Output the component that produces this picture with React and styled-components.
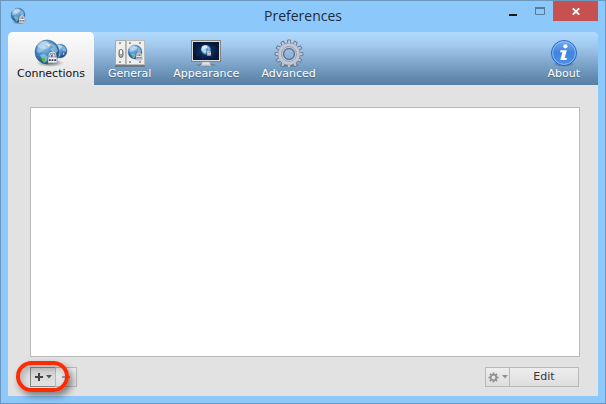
import React from "react";
import styled, { createGlobalStyle, css } from "styled-components";

const GlobalStyle = createGlobalStyle`
  *, *::before, *::after { box-sizing: border-box; }
  body { margin: 0; font-family: "DejaVu Sans", sans-serif; font-size: 11px; }
  button { font: inherit; margin: 0; border: 0; padding: 0; background: none; }
  svg { display: block; flex: none; }
`;

const Window = styled.main`
  min-height: 100vh;
  display: flex;
  flex-direction: column;
  padding: 0 7px 7px;
  border: 1px solid #6c98c0;
  background: #8dc8fb;
`;

const TitleBar = styled.header`
  height: 31px;
  flex: none;
  display: grid;
  grid-template-columns: 1fr auto 1fr;
  align-items: start;
`;

const AppIcon = styled.span`
  padding: 6px 0 0 2px;
`;

const Title = styled.h1`
  margin: 0;
  font: 400 14px/30px "Open Sans", sans-serif;
  color: #222c38;
`;

const WindowControls = styled.div`
  display: flex;
  justify-content: flex-end;
`;

const WindowButton = styled.button`
  width: ${(p) => (p.$close ? 45 : 27)}px;
  height: 20px;
  display: flex;
  align-items: center;
  justify-content: center;
  background: ${(p) => (p.$close ? "#c75050" : "transparent")};
`;

const Client = styled.section`
  flex: 1;
  display: flex;
  flex-direction: column;
  border-radius: 5px 5px 0 0;
  background: #e2e2e2;
`;

const Toolbar = styled.nav`
  height: 53px;
  flex: none;
  display: flex;
  border-radius: 5px 5px 0 0;
  background: linear-gradient(#b1daff 0%, #a2caed 25%, #648bb0 85%, #587fa4 100%);
`;

const TabButton = styled.button`
  display: flex;
  flex-direction: column;
  align-items: center;
  justify-content: flex-start;
  padding: 6px 11px 0;
  line-height: 14px;
  color: #fff;
  text-shadow: 0 1px 1px #43678a;
  ${(p) => p.$active && css`
    padding: 6px 9px 0;
    margin-right: 3px;
    border-radius: 5px 5px 0 0;
    color: #111;
    text-shadow: none;
    background: linear-gradient(#fcfcfc, #e2e2e2);
  `}
  ${(p) => p.$end && css`
    margin-left: auto;
    padding: 6px 18px 0;
  `}
`;

const Body = styled.div`
  flex: 1;
  display: flex;
  flex-direction: column;
  padding: 22px 18px 9px 22px;
`;

const ConnectionList = styled.div`
  flex: 1;
  border: 1px solid #bababa;
  background: #fff;
`;

const Actions = styled.footer`
  display: flex;
  justify-content: space-between;
  margin: 10px 1px 0 0;
`;

const ButtonGroup = styled.div`
  position: relative;
  display: flex;
`;

const ActionButton = styled.button`
  width: ${(p) => p.$width}px;
  height: 20px;
  display: flex;
  align-items: center;
  justify-content: center;
  gap: 3px;
  border: 1px solid #b9b9b9;
  color: #36364a;
  line-height: 18px;
  background: ${(p) => (p.$pressed ? "linear-gradient(#d2d2d2, #e2e2e2)" : "linear-gradient(#ededed, #dedede)")};
  & + & { margin-left: -1px; }
  ${(p) => p.$pressed && css`border-color: #888;`}
`;

const Highlight = styled.span`
  position: absolute;
  inset: -6px 8px -5px -14px;
  border: 4px solid #fb2c05;
  border-radius: 16px;
  box-shadow: 3px 4px 7px rgba(0, 0, 0, 0.45), inset 3px 4px 6px rgba(0, 0, 0, 0.2);
  pointer-events: none;
`;

function Globe({ x, y, r }) {
  return (
    <g transform={`translate(${x} ${y}) scale(${r / 12})`}>
      <circle r="12" fill="url(#globe)" stroke="#3d6794" strokeWidth=".6" />
      <path d="M-9-6-5-10 0-11 1-8-3-6-1-4-4-1-8 1-10-1ZM4-9 9-6 11-1 8 2 5-1 3-3 6-5 3-7ZM-7 3-3 2 1 5 0 9-3 11-5 7Z" fill="#a9d8ee" opacity=".6" />
      <path d="M-5 6-2 6-2 9-5 9Z" fill="#49bd48" />
      <path d="M-1-8 3-8 2-5ZM6 2 8 5 5 7Z" fill="#f0dda0" />
      <ellipse cx="-3" cy="-7" rx="7" ry="4" fill="#fff" opacity=".32" />
    </g>
  );
}

function Lock({ x, y, size }) {
  return (
    <g transform={`translate(${x} ${y}) scale(${size / 10})`}>
      <path d="M2 5V3a3 3 0 0 1 6 0v2" fill="none" stroke="#fff" strokeWidth="2.6" />
      <path d="M2 5V3a3 3 0 0 1 6 0v2" fill="none" stroke="#858585" strokeWidth="1.2" />
      <rect y="4.5" width="10" height="7" rx=".7" fill="#f3f4fa" stroke="#77798a" strokeWidth=".7" />
      <path d="M1 8h2m1 0h2m1 0h2" stroke="#28366f" strokeWidth="2" />
      <path d="M1 10.5h8" stroke="#aaa" strokeWidth=".7" />
    </g>
  );
}

function Defs() {
  return (
    <svg width="0" height="0" aria-hidden="true">
      <defs>
        <radialGradient id="globe" cx=".4" cy=".3" r=".75">
          <stop stopColor="#8cc4ee" /><stop offset=".55" stopColor="#437fbe" /><stop offset="1" stopColor="#173d70" />
        </radialGradient>
        <radialGradient id="shade"><stop stopColor="#222" stopOpacity=".65" /><stop offset="1" stopColor="#222" stopOpacity="0" /></radialGradient>
        <radialGradient id="screen"><stop stopColor="#123e75" /><stop offset="1" stopColor="#051638" /></radialGradient>
        <linearGradient id="metal" x2="0" y2="1"><stop stopColor="#fafafa" /><stop offset="1" stopColor="#b9bfca" /></linearGradient>
        <linearGradient id="blue" x2="0" y2="1"><stop stopColor="#78afee" /><stop offset=".48" stopColor="#4184dc" /><stop offset="1" stopColor="#4b91e9" /></linearGradient>
      </defs>
    </svg>
  );
}

function ConnectionsIcon() {
  return (
    <svg width="36" height="29" viewBox="0 0 36 29">
      <ellipse cx="17" cy="25" rx="14" ry="4" fill="url(#shade)" />
      <Globe x={27} y={13} r={7} />
      <Globe x={14} y={14} r={12} />
      <Lock x={15} y={15} size={9} />
    </svg>
  );
}

function GeneralIcon() {
  return (
    <svg width="32" height="29" viewBox="0 0 32 29">
      <rect x="1" y="2" width="30" height="27" fill="#5b6064" opacity=".6" />
      <rect x="1.5" y="2.5" width="10" height="24" fill="#eeeeec" stroke="#aaa" />
      <rect x="12.5" y="2.5" width="18" height="24" fill="#eeeeec" stroke="#bbb" />
      <path d="M12 3v24" stroke="#bbb" />
      {[[6, 5], [6, 24], [16, 5], [26, 5], [16, 24], [26, 24]].map(([x, y]) => <rect key={`${x}-${y}`} x={x - 1} y={y - 1} width="2" height="2" rx=".5" fill="#999690" />)}
      <rect x="5" y="11.5" width="4" height="8" rx="2" fill="#aaa" stroke="#555" strokeWidth=".8" />
      <rect x="6" y="12" width="2" height="4" rx="1" fill="#fff" />
      <Globe x={21} y={14} r={7} />
      <Lock x={22} y={15} size={6} />
    </svg>
  );
}

function AppearanceIcon() {
  return (
    <svg width="32" height="29" viewBox="0 0 32 29">
      <ellipse cx="16" cy="27" rx="11" ry="2" fill="url(#shade)" />
      <path d="M12 24h8v2l2 2H10l2-2Z" fill="url(#metal)" stroke="#9ba3aa" strokeWidth=".6" />
      <rect x="1.5" y="2.5" width="29" height="21" fill="#dedede" stroke="#87837c" />
      <rect x="3" y="4" width="26" height="18" fill="url(#screen)" />
      <path d="M6 7h1m5 13h1m10-11h1m-3 10h1M7 17h1" stroke="#1d4275" />
      <Globe x={16} y={12} r={5} />
      <path d="M12 8 16 7 18 9 15 11 17 14 14 15 11 12Z" fill="#e7fbff" opacity=".6" />
      <Lock x={17} y={13} size={4} />
    </svg>
  );
}

function AdvancedIcon() {
  return (
    <svg width="30" height="29" viewBox="0 0 30 29">
      <ellipse cx="15" cy="27" rx="11" ry="3" fill="url(#shade)" opacity=".7" />
      <g fill="#c0c8d5" stroke="#66788e" strokeWidth=".9">
        {Array.from({ length: 12 }, (_, i) => <path key={i} d="M13 7 13.6 2h2.8L17 7" transform={`rotate(${i * 30} 15 16)`} />)}
        <path fillRule="evenodd" d="M15 5.5a10.5 10.5 0 1 0 0 21 10.5 10.5 0 0 0 0-21m0 5a5.5 5.5 0 1 1 0 11 5.5 5.5 0 0 1 0-11" />
      </g>
      <g fill="none">
        <circle cx="15" cy="16" r="9.9" stroke="#c0c8d5" strokeWidth="1.8" />
        <circle cx="15" cy="16" r="7.5" stroke="#96a5b9" />
        <circle cx="15" cy="16" r="5.4" stroke="#64768d" strokeWidth="1.2" />
      </g>
    </svg>
  );
}

function AboutIcon() {
  return (
    <svg width="28" height="29" viewBox="0 0 28 29">
      <ellipse cx="14" cy="26" rx="11" ry="3" fill="url(#shade)" />
      <circle cx="14" cy="15" r="12.5" fill="url(#blue)" stroke="#286ac9" />
      <circle cx="14" cy="15" r="11.4" fill="none" stroke="#9ac5fa" strokeWidth=".8" />
      <circle cx="15.4" cy="8.3" r="2.1" fill="#fff" />
      <path d="M10.5 12.3h6.3l-2.1 7.8h2.3l-.5 1.9h-6.2l2.1-7.8h-2.3Z" fill="#fff" />
    </svg>
  );
}

function Caret({ color }) {
  return <svg width="6" height="4" viewBox="0 0 6 4"><path d="M0 0h6L3 3.5Z" fill={color} /></svg>;
}

function SmallGear() {
  return (
    <svg width="11" height="11" viewBox="0 0 11 11">
      <g stroke="#929292" fill="none">
        <circle cx="5.5" cy="5.5" r="2.8" strokeWidth="1.8" />
        {Array.from({ length: 8 }, (_, i) => <path key={i} d="M5.5 0.5v2" strokeWidth="1.8" transform={`rotate(${i * 45} 5.5 5.5)`} />)}
      </g>
    </svg>
  );
}

const tabs = [
  { label: "Connections", Icon: ConnectionsIcon, active: true },
  { label: "General", Icon: GeneralIcon },
  { label: "Appearance", Icon: AppearanceIcon },
  { label: "Advanced", Icon: AdvancedIcon },
  { label: "About", Icon: AboutIcon, end: true },
];

export default function App() {
  return (
    <>
      <GlobalStyle />
      <Window>
        <TitleBar>
          <AppIcon>
            <svg width="18" height="18" viewBox="0 0 18 18">
              <ellipse cx="9" cy="15" rx="7" ry="2.5" fill="url(#shade)" />
              <Globe x={8} y={8} r={7} />
              <Lock x={9} y={9} size={6} />
            </svg>
          </AppIcon>
          <Title>Preferences</Title>
          <WindowControls>
            <WindowButton aria-label="Minimize">
              <svg width="8" height="20"><path d="M0 14h8" stroke="#1b1b1b" strokeWidth="2" /></svg>
            </WindowButton>
            <WindowButton aria-label="Maximize">
              <svg width="10" height="8"><path d="M.5 1h9v6.5h-9Z" fill="none" stroke="#587b9b" /><path d="M0 1h10" stroke="#587b9b" strokeWidth="2" /></svg>
            </WindowButton>
            <WindowButton $close aria-label="Close">
              <svg width="8" height="7"><path d="m.8.3 6.4 6.4m0-6.4L.8 6.7" stroke="#fff" strokeWidth="1.8" /></svg>
            </WindowButton>
          </WindowControls>
        </TitleBar>
        <Client>
          <Toolbar aria-label="Preference sections">
            {tabs.map(({ label, Icon, active, end }) => (
              <TabButton key={label} $active={active} $end={end} aria-current={active ? "page" : undefined}>
                <Icon />
                {label}
              </TabButton>
            ))}
          </Toolbar>
          <Body>
            <ConnectionList aria-label="Connections" role="listbox" />
            <Actions>
              <ButtonGroup>
                <ActionButton $width={26} $pressed aria-label="Add connection">
                  <svg width="8" height="8"><path d="M4 0v8M0 4h8" stroke="#444" strokeWidth="2" /></svg>
                  <Caret color="#555" />
                </ActionButton>
                <ActionButton $width={22} aria-label="Remove connection" disabled>
                  <svg width="8" height="2"><path d="M0 1h8" stroke="#999" strokeWidth="2" /></svg>
                </ActionButton>
                <Highlight />
              </ButtonGroup>
              <ButtonGroup>
                <ActionButton $width={25} aria-label="Connection actions"><SmallGear /><Caret color="#929292" /></ActionButton>
                <ActionButton $width={70}>Edit</ActionButton>
              </ButtonGroup>
            </Actions>
          </Body>
        </Client>
        <Defs />
      </Window>
    </>
  );
}
